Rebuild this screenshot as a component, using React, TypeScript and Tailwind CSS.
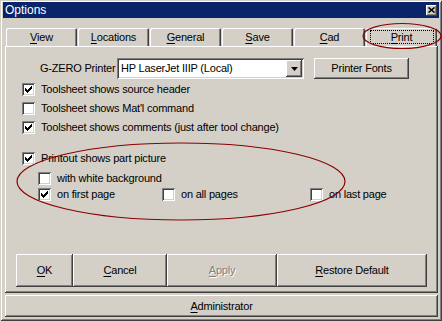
import React from "react";

const raised =
  "shadow-[inset_-1px_-1px_#404040,inset_1px_1px_#ffffff,inset_-2px_-2px_#808080,inset_2px_2px_#d4d0c8]";
const sunken =
  "shadow-[inset_1px_1px_#808080,inset_-1px_-1px_#ffffff,inset_2px_2px_#404040,inset_-2px_-2px_#d4d0c8]";

// classic 7x7 check glyph
const checkPixels = [
  [6, 0], [5, 1], [6, 1], [0, 2], [4, 2], [5, 2], [6, 2],
  [0, 3], [1, 3], [3, 3], [4, 3], [5, 3], [0, 4], [1, 4], [2, 4], [3, 4], [4, 4],
  [1, 5], [2, 5], [3, 5], [2, 6],
];

function Mn({ text }: { text: string }) {
  return (
    <>
      <span className="underline underline-offset-2">{text[0]}</span>
      {text.slice(1)}
    </>
  );
}

function Check({ on, label }: { on?: boolean; label: string }) {
  return (
    <div className="flex items-center h-[13px] whitespace-nowrap">
      <div className={`w-[13px] h-[13px] bg-white shrink-0 relative ${sunken}`}>
        {on && (
          <svg className="absolute left-[3px] top-[3px]" width="7" height="7" viewBox="0 0 7 7" shapeRendering="crispEdges">
            {checkPixels.map(([x, y]) => (
              <rect key={`${x}-${y}`} x={x} y={y} width="1" height="1" fill="#000" />
            ))}
          </svg>
        )}
      </div>
      <span className="ml-[6px] leading-[13px]">{label}</span>
    </div>
  );
}

const tabs = ["View", "Locations", "General", "Save", "Cad", "Print"];

export default function App() {
  return (
    <div className="relative w-[442px] h-[321px] overflow-hidden bg-[#d4d0c8] text-black text-[11px] tracking-[-0.2px] font-['Liberation_Sans',Arial,sans-serif] px-[3px] pt-[2px] shadow-[inset_1px_1px_#d4d0c8,inset_-1px_-1px_#404040,inset_2px_2px_#ffffff,inset_-2px_-2px_#808080]">
      {/* title bar */}
      <div className="h-[16px] bg-[#0a246a] flex items-center justify-between pl-[2px] pr-[2px]">
        <span className="text-white text-[12px] leading-none tracking-normal">Options</span>
        <div className={`w-[11px] h-[11px] bg-[#d4d0c8] flex items-center justify-center ${raised}`}>
          <svg width="7" height="6" viewBox="0 0 7 6">
            <path d="M0.5 0.5 L6.5 5.5 M6.5 0.5 L0.5 5.5" stroke="#000" strokeWidth="1.6" />
          </svg>
        </div>
      </div>

      {/* tabs */}
      <div className="flex gap-[1px] ml-[3px] mt-[10px] h-[18px]">
        {tabs.map((t) => (
          <div
            key={t}
            className="w-[71px] h-[18px] rounded-t-[2px] flex items-center justify-center shadow-[inset_1px_1px_#ffffff,inset_-1px_0_#404040,inset_-2px_0_#808080]"
          >
            {t === "Print" ? (
              <div className="w-[64px] h-[14px] border border-dotted border-black flex items-center justify-center">
                <span className="leading-none"><Mn text={t} /></span>
              </div>
            ) : (
              <span className="leading-none"><Mn text={t} /></span>
            )}
          </div>
        ))}
      </div>

      {/* panel */}
      <div className={`ml-[2px] w-[433px] h-[247px] flex flex-col ${raised}`}>
        <div className="mt-[12px] h-[21px] flex items-center">
          <span className="ml-[35px] w-[77px] shrink-0 whitespace-nowrap">G-ZERO Printer</span>
          <div className={`w-[187px] h-[21px] shrink-0 bg-white flex items-center justify-between pl-[4px] pr-[2px] ${sunken}`}>
            <span className="whitespace-nowrap">HP LaserJet IIIP (Local)</span>
            <div className={`w-[16px] h-[17px] bg-[#d4d0c8] flex items-center justify-center ${raised}`}>
              <svg width="7" height="4" viewBox="0 0 7 4">
                <polygon points="0,0 7,0 3.5,4" fill="#000" />
              </svg>
            </div>
          </div>
          <div className={`ml-[10px] w-[95px] h-[21px] shrink-0 flex items-center justify-center ${raised}`}>
            Printer Fonts
          </div>
        </div>

        <div className="ml-[17px] mt-[4px]">
          <Check on label="Toolsheet shows source header" />
        </div>
        <div className="ml-[17px] mt-[6px]">
          <Check label="Toolsheet shows Mat'l command" />
        </div>
        <div className="ml-[17px] mt-[6px]">
          <Check on label="Toolsheet shows comments (just after tool change)" />
        </div>

        <div className="ml-[17px] mt-[18px]">
          <Check on label="Printout shows part picture" />
        </div>
        <div className="ml-[33px] mt-[7px]">
          <Check label="with white background" />
        </div>
        <div className="ml-[33px] mt-[3px] flex">
          <div className="w-[124px]">
            <Check on label="on first page" />
          </div>
          <div className="w-[148px]">
            <Check label="on all pages" />
          </div>
          <Check label="on last page" />
        </div>

        <div className="ml-[11px] mt-[53px] flex h-[33px]">
          <div className={`w-[57px] flex items-center justify-center ${raised}`}>
            <span><Mn text="OK" /></span>
          </div>
          <div className={`w-[94px] flex items-center justify-center ${raised}`}>
            <span><Mn text="Cancel" /></span>
          </div>
          <div className={`w-[110px] flex items-center justify-center text-[#808080] [text-shadow:1px_1px_#ffffff] ${raised}`}>
            <span><Mn text="Apply" /></span>
          </div>
          <div className={`w-[150px] flex items-center justify-center ${raised}`}>
            <span><Mn text="Restore Default" /></span>
          </div>
        </div>
      </div>

      {/* status button */}
      <div className={`ml-[2px] mt-[2px] w-[433px] h-[22px] flex items-center justify-center ${raised}`}>
        <span><Mn text="Administrator" /></span>
      </div>

      {/* red annotation ellipses */}
      <svg className="absolute inset-0 pointer-events-none" width="442" height="321" viewBox="0 0 442 321">
        <ellipse cx="402" cy="36" rx="39" ry="12.5" fill="none" stroke="#8b0000" strokeWidth="1.2" />
        <ellipse cx="181" cy="181.5" rx="164" ry="38.5" fill="none" stroke="#8b0000" strokeWidth="1.2" />
      </svg>
    </div>
  );
}
